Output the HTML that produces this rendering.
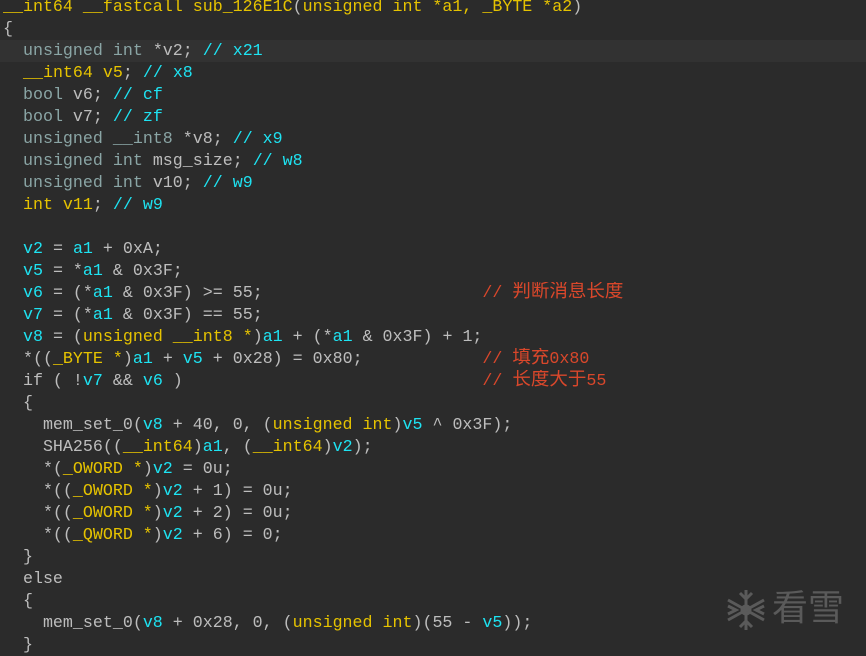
<!DOCTYPE html>
<html><head><meta charset="utf-8"><style>
html,body{margin:0;padding:0;background:#2b2b2b;width:866px;height:655px;overflow:hidden}
#c{position:absolute;left:3px;top:-4px;font-family:"Liberation Mono","Noto Sans CJK SC",monospace;font-size:16.65px;line-height:22px;color:#bdbdbd}
.l{height:22px;white-space:pre;overflow:hidden}
.hl{background:#323232;margin-left:-3px;padding-left:3px;width:866px}
.y{color:#e6c300}.c{color:#1ee3f2}.t{color:#8aa5a5}.r{color:#d9472b}
.k{font-size:18.5px;font-family:"Noto Sans CJK SC",sans-serif;line-height:0;vertical-align:baseline}
.wm{position:absolute;color:#5a5a5a;font-family:"Noto Sans CJK SC",sans-serif;font-size:36px;line-height:40px}
</style></head><body>
<div id="c"><div class="l"><span class="y">__int64 __fastcall sub_126E1C</span>(<span class="y">unsigned int *a1, _BYTE *a2</span>)</div><div class="l">{</div><div class="l hl">  <span class="t">unsigned int</span> *v2; <span class="c">// x21</span></div><div class="l">  <span class="y">__int64</span> <span class="y">v5</span>; <span class="c">// x8</span></div><div class="l">  <span class="t">bool</span> v6; <span class="c">// cf</span></div><div class="l">  <span class="t">bool</span> v7; <span class="c">// zf</span></div><div class="l">  <span class="t">unsigned __int8</span> *v8; <span class="c">// x9</span></div><div class="l">  <span class="t">unsigned int</span> msg_size; <span class="c">// w8</span></div><div class="l">  <span class="t">unsigned int</span> v10; <span class="c">// w9</span></div><div class="l">  <span class="y">int v11</span>; <span class="c">// w9</span></div><div class="l"> </div><div class="l">  <span class="c">v2</span> = <span class="c">a1</span> + 0xA;</div><div class="l">  <span class="c">v5</span> = *<span class="c">a1</span> &amp; 0x3F;</div><div class="l">  <span class="c">v6</span> = (*<span class="c">a1</span> &amp; 0x3F) &gt;= 55;                      <span class="r">// <span class="k">判断消息长度</span></span></div><div class="l">  <span class="c">v7</span> = (*<span class="c">a1</span> &amp; 0x3F) == 55;</div><div class="l">  <span class="c">v8</span> = (<span class="y">unsigned __int8 *</span>)<span class="c">a1</span> + (*<span class="c">a1</span> &amp; 0x3F) + 1;</div><div class="l">  *((<span class="y">_BYTE *</span>)<span class="c">a1</span> + <span class="c">v5</span> + 0x28) = 0x80;            <span class="r">// <span class="k">填充</span>0x80</span></div><div class="l">  if ( !<span class="c">v7</span> &amp;&amp; <span class="c">v6</span> )                              <span class="r">// <span class="k">长度大于</span>55</span></div><div class="l">  {</div><div class="l">    mem_set_0(<span class="c">v8</span> + 40, 0, (<span class="y">unsigned int</span>)<span class="c">v5</span> ^ 0x3F);</div><div class="l">    SHA256((<span class="y">__int64</span>)<span class="c">a1</span>, (<span class="y">__int64</span>)<span class="c">v2</span>);</div><div class="l">    *(<span class="y">_OWORD *</span>)<span class="c">v2</span> = 0u;</div><div class="l">    *((<span class="y">_OWORD *</span>)<span class="c">v2</span> + 1) = 0u;</div><div class="l">    *((<span class="y">_OWORD *</span>)<span class="c">v2</span> + 2) = 0u;</div><div class="l">    *((<span class="y">_QWORD *</span>)<span class="c">v2</span> + 6) = 0;</div><div class="l">  }</div><div class="l">  else</div><div class="l">  {</div><div class="l">    mem_set_0(<span class="c">v8</span> + 0x28, 0, (<span class="y">unsigned int</span>)(55 - <span class="c">v5</span>));</div><div class="l">  }</div></div>
<svg style="position:absolute;left:724px;top:588px" width="44" height="44" viewBox="0 0 44 44" stroke="#5a5a5a" stroke-width="3" fill="none">
<line x1="22" y1="2" x2="22" y2="42"/><line x1="4" y1="12" x2="40" y2="32"/><line x1="4" y1="32" x2="40" y2="12"/>
<circle cx="22" cy="22" r="4"/>
<path d="M16 5l6 6 6-6M16 39l6-6 6 6M4 18l8 4-8 4M40 18l-8 4 8 4"/>
</svg>
<div class="wm" style="left:772px;top:585px">看雪</div>
</body></html>
